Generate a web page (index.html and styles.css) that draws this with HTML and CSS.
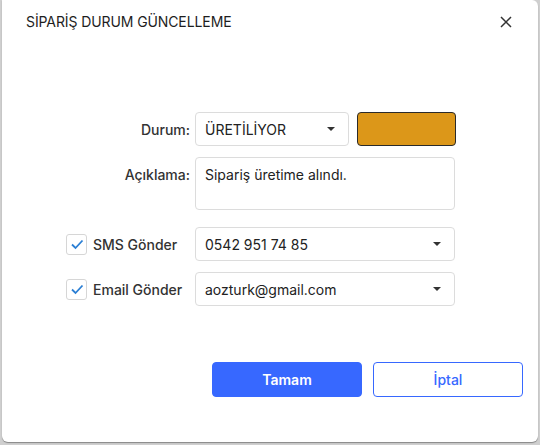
FILE: index.html
```html
<!DOCTYPE html>
<html lang="tr">
<head>
<meta charset="utf-8">
<link rel="stylesheet" href="styles.css">
</head>
<body>
<div class="dialog">
  <div class="header">
    <div class="title">SİPARİŞ DURUM GÜNCELLEME</div>
    <div class="close">
      <svg width="12" height="12" viewBox="0 0 12 12"><path d="M1 1L11 11M11 1L1 11" stroke="#333" stroke-width="1.5" fill="none"/></svg>
    </div>
  </div>
  <div class="form">
    <div class="row r1">
      <div class="label">Durum:</div>
      <div class="ctrl">
        <div class="select status"><span>ÜRETİLİYOR</span><span class="caret"></span></div>
        <div class="swatch"></div>
      </div>
    </div>
    <div class="row r2">
      <div class="label top">Açıklama:</div>
      <div class="ctrl">
        <div class="textarea">Sipariş üretime alındı.</div>
      </div>
    </div>
    <div class="row r3">
      <div class="check-label">
        <span class="checkbox"><svg width="14" height="12" viewBox="0 0 14 12"><path d="M2 6.5L5.5 10L12.5 2.5" stroke="#2b7fd4" stroke-width="1.8" fill="none"/></svg></span>
        <span>SMS Gönder</span>
      </div>
      <div class="ctrl">
        <div class="select wide"><span>0542 951 74 85</span><span class="caret"></span></div>
      </div>
    </div>
    <div class="row r4">
      <div class="check-label">
        <span class="checkbox"><svg width="14" height="12" viewBox="0 0 14 12"><path d="M2 6.5L5.5 10L12.5 2.5" stroke="#2b7fd4" stroke-width="1.8" fill="none"/></svg></span>
        <span>Email Gönder</span>
      </div>
      <div class="ctrl">
        <div class="select wide"><span>aozturk@gmail.com</span><span class="caret"></span></div>
      </div>
    </div>
  </div>
  <div class="buttons">
    <button class="btn primary">Tamam</button>
    <button class="btn outline">İptal</button>
  </div>
</div>
</body>
</html>
```
FILE: styles.css
```css
html, body {
  margin: 0;
  padding: 0;
}
body {
  width: 540px;
  height: 445px;
  background: #cfcfcf;
  font-family: Inter, "Noto Sans", sans-serif;
  color: #222;
  overflow: hidden;
}
.dialog {
  width: 536px;
  height: 442px;
  margin-left: 2px;
  background: #fff;
  border-radius: 0 6px 6px 6px;
  box-shadow: 0 1px 1px rgba(0,0,0,0.35);
  display: flex;
  flex-direction: column;
  box-sizing: border-box;
}
.header {
  display: flex;
  justify-content: space-between;
  align-items: center;
  padding: 12px 26px 0 24px;
  height: 20px;
}
.title {
  font-size: 14px;
  line-height: 20px;
  color: #1e1e1e;
  letter-spacing: -0.1px;
}
.close {
  width: 12px;
  height: 12px;
  display: flex;
}
.form {
  margin-top: 80px;
  display: flex;
  flex-direction: column;
}
.row {
  display: flex;
  align-items: center;
}
.r2 { margin-top: 11px; align-items: flex-start; }
.r3 { margin-top: 17px; }
.r4 { margin-top: 11px; }
.label {
  width: 188px;
  text-align: right;
  font-size: 14px;
  font-weight: 500;
  color: #333;
  padding-right: 5px;
}
.label.top { padding-top: 9px; }
.check-label {
  width: 129px;
  margin-left: 64px;
  display: flex;
  align-items: center;
  gap: 6px;
  font-size: 14px;
  font-weight: 500;
  color: #333;
}
.checkbox {
  width: 19px;
  height: 19px;
  border: 1px solid #d6d6d6;
  border-radius: 3px;
  display: flex;
  align-items: center;
  justify-content: center;
  background: #fff;
}
.ctrl {
  display: flex;
  gap: 8px;
}
.select {
  height: 34px;
  box-sizing: border-box;
  border: 1px solid #dcdcdc;
  border-radius: 4px;
  display: flex;
  align-items: center;
  justify-content: space-between;
  padding: 0 12px 0 9px;
  font-size: 14px;
  color: #222;
}
.select.status { width: 154px; padding-right: 13px; }
.select.wide { width: 260px; padding-right: 13px; }
.caret {
  width: 0;
  height: 0;
  border-left: 4.5px solid transparent;
  border-right: 4.5px solid transparent;
  border-top: 4.5px solid #333;
}
.swatch {
  width: 99px;
  height: 34px;
  box-sizing: border-box;
  background: #dc9719;
  border: 1px solid #2a2a2a;
  border-radius: 4px;
}
.textarea {
  width: 260px;
  height: 53px;
  box-sizing: border-box;
  border: 1px solid #dcdcdc;
  border-radius: 4px;
  padding: 7px 9px;
  font-size: 14px;
  line-height: 20px;
  color: #222;
}
.buttons {
  margin-top: 56px;
  display: flex;
  justify-content: flex-end;
  gap: 11px;
  padding-right: 15px;
}
.btn {
  width: 150px;
  height: 35px;
  box-sizing: border-box;
  border-radius: 4px;
  font-family: Inter, "Noto Sans", sans-serif;
  font-size: 14px;
  font-weight: 600;
  cursor: pointer;
}
.primary {
  background: #3768ff;
  border: 1px solid #3768ff;
  color: #fff;
}
.outline {
  background: #fff;
  border: 1px solid #3768ff;
  color: #3768ff;
  font-weight: 500;
}
```
